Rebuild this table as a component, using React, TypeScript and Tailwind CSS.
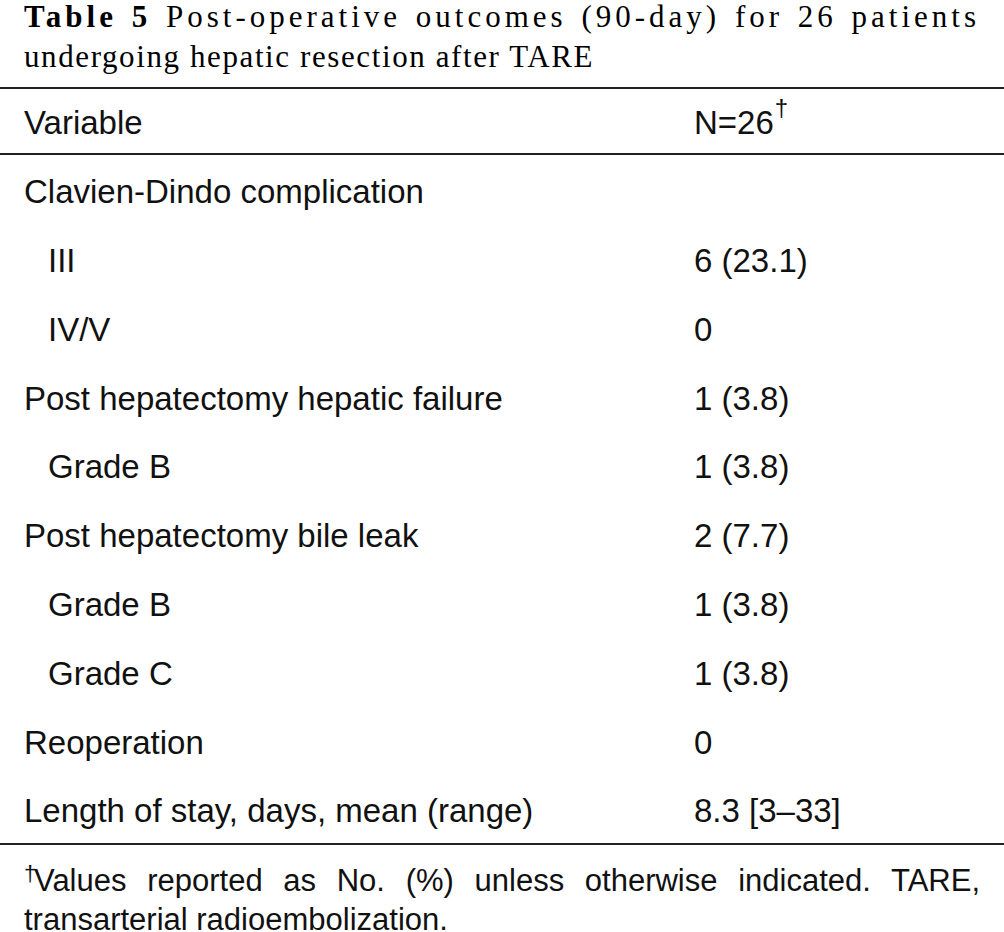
import React from 'react';

type Row = { label: string; value: string; indent?: boolean };

const rows: Row[] = [
    { label: 'Clavien-Dindo complication', value: '' },
    { label: 'III', value: '6 (23.1)', indent: true },
    { label: 'IV/V', value: '0', indent: true },
    { label: 'Post hepatectomy hepatic failure', value: '1 (3.8)' },
    { label: 'Grade B', value: '1 (3.8)', indent: true },
    { label: 'Post hepatectomy bile leak', value: '2 (7.7)' },
    { label: 'Grade B', value: '1 (3.8)', indent: true },
    { label: 'Grade C', value: '1 (3.8)', indent: true },
    { label: 'Reoperation', value: '0' },
    { label: 'Length of stay, days, mean (range)', value: '8.3 [3–33]' },
];

const sans = "font-['Liberation_Sans',Arial,sans-serif]";

export default function App() {
    return (
        <div className="w-[1004px] h-[932px] bg-white text-black overflow-hidden">
            <div className="-mt-[3px] px-[24px] font-['Liberation_Serif','Times_New_Roman',serif] text-[31px] leading-[40px]">
                <div className="text-justify [text-align-last:justify] tracking-[4px]">
                    <b className="font-bold">Table 5</b> Post-operative outcomes (90-day) for 26 patients
                </div>
                <div className="tracking-[1.6px]">undergoing hepatic resection after TARE</div>
            </div>
            <div className={`mt-[10px] ${sans} text-[33px] text-[#111]`}>
                <div className="border-t-2 border-b-2 border-[#222] h-[68px] pt-[4px] flex items-center">
                    <div className="pl-[24px] w-[694px]">Variable</div>
                    <div className="flex items-start">
                        N=26<span className="text-[24px] leading-none -mt-[2px] ml-[1px]">†</span>
                    </div>
                </div>
                <div className="border-b-2 border-[#222]">
                    {rows.map((r, i) => (
                        <div key={i} className="h-[68.8px] pt-[5px] flex items-center">
                            <div className={`w-[694px] ${r.indent ? 'pl-[48px]' : 'pl-[24px]'}`}>{r.label}</div>
                            <div>{r.value}</div>
                        </div>
                    ))}
                </div>
                <p className="px-[24px] pt-[16px] text-[31px] leading-[39px] text-justify">
                    <span className="inline-block w-[10px] text-[22px] leading-none align-top mt-[2px]">†</span>Values reported as No. (%) unless otherwise indicated. TARE, transarterial radioembolization.
                </p>
            </div>
        </div>
    );
}
